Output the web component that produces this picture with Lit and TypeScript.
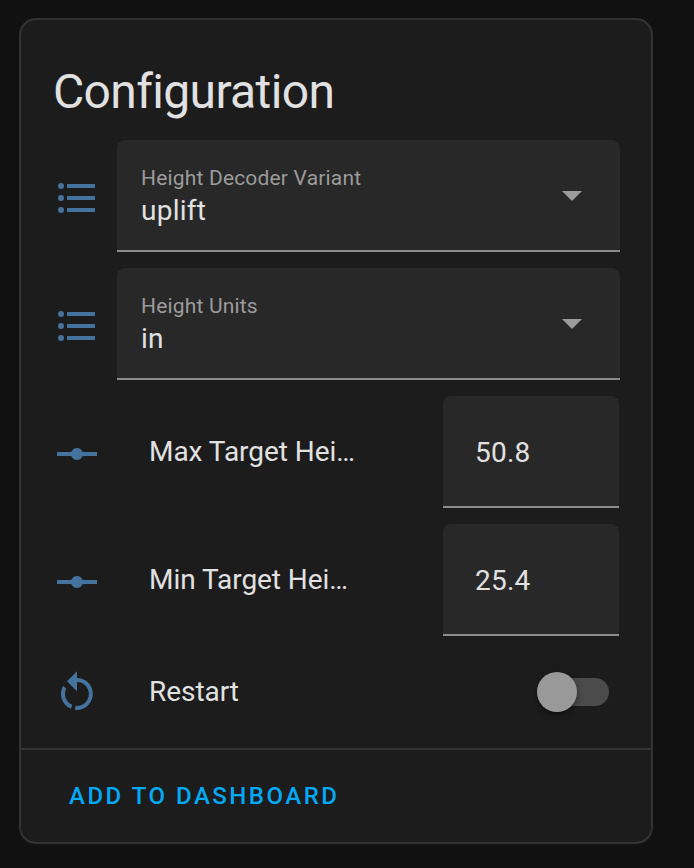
import { LitElement, html, css, svg } from "lit";
import { customElement, property } from "lit/decorators.js";

const ICONS: Record<string, string> = {
  list: "M7,5H21V7H7V5M7,13V11H21V13H7M4,4.5A1.5,1.5 0 0,1 5.5,6A1.5,1.5 0 0,1 4,7.5A1.5,1.5 0 0,1 2.5,6A1.5,1.5 0 0,1 4,4.5M4,10.5A1.5,1.5 0 0,1 5.5,12A1.5,1.5 0 0,1 4,13.5A1.5,1.5 0 0,1 2.5,12A1.5,1.5 0 0,1 4,10.5M7,19V17H21V19H7M4,16.5A1.5,1.5 0 0,1 5.5,18A1.5,1.5 0 0,1 4,19.5A1.5,1.5 0 0,1 2.5,18A1.5,1.5 0 0,1 4,16.5Z",
  vertex: "M2,11H9.17C9.58,9.83 10.69,9 12,9C13.31,9 14.42,9.83 14.83,11H22V13H14.83C14.42,14.17 13.31,15 12,15C10.69,15 9.58,14.17 9.17,13H2V11Z",
  restart: "M12,4C14.1,4 16.1,4.8 17.6,6.3C20.7,9.4 20.7,14.5 17.6,17.6C15.8,19.5 13.3,20.2 10.9,19.9L11.4,17.9C13.1,18.1 14.9,17.5 16.2,16.2C18.5,13.9 18.5,10.1 16.2,7.7C15.1,6.6 13.5,6 12,6V10.6L7,5.6L12,0.6V4M6.3,17.6C3.7,15 3.3,11 5.1,7.9L6.6,9.4C5.5,11.6 5.9,14.4 7.8,16.2C8.3,16.7 8.9,17.1 9.6,17.4L9,19.4C8,19 7.1,18.4 6.3,17.6Z",
  caret: "M7,10L12,15L17,10H7Z",
};

@customElement("ui-icon")
class UiIcon extends LitElement {
  @property() name = "list";
  static styles = css`
    :host { display: block; flex: none; width: 48px; height: 48px; }
    svg { display: block; width: 100%; height: 100%; fill: currentColor; }
  `;
  render() {
    return html`<svg viewBox="0 0 24 24">${svg`<path d=${ICONS[this.name]}></path>`}</svg>`;
  }
}

@customElement("select-row")
class SelectRow extends LitElement {
  @property() label = "";
  @property() value = "";
  static styles = css`
    :host { display: flex; height: 112px; align-items: center; }
    .lead { color: #44739e; margin: 4px 16px 0 0; }
    .field {
      flex: 1; height: 112px; box-sizing: border-box; display: flex; align-items: center;
      background: #282828; border-bottom: 2px solid #8b8b8b; border-radius: 8px 8px 0 0;
      padding: 0 24px;
    }
    .texts { flex: 1; display: flex; flex-direction: column; padding-top: 6px; }
    .label { font-size: 21px; line-height: 26px; letter-spacing: 0.18px; color: #9b9b9b; }
    .value { font-size: 28px; line-height: 40px; letter-spacing: 0.25px; color: #e1e1e1; }
    .caret { color: #9b9b9b; }
  `;
  render() {
    return html`
      <ui-icon class="lead" name="list"></ui-icon>
      <div class="field">
        <div class="texts">
          <span class="label">${this.label}</span>
          <span class="value">${this.value}</span>
        </div>
        <ui-icon class="caret" name="caret"></ui-icon>
      </div>
    `;
  }
}

@customElement("number-row")
class NumberRow extends LitElement {
  @property() label = "";
  @property() value = "";
  static styles = css`
    :host { display: flex; height: 112px; align-items: center; padding-right: 1px; }
    .lead { color: #44739e; margin: 4px 48px 0 0; }
    .name {
      width: 210px; font-size: 28px; line-height: 40px; letter-spacing: -0.05px; color: #e1e1e1;
      white-space: nowrap; overflow: hidden; text-overflow: ellipsis;
    }
    .field {
      width: 176px; height: 112px; box-sizing: border-box; margin-left: auto;
      display: flex; align-items: center; padding: 2px 32px 0;
      background: #282828; border-bottom: 2px solid #8b8b8b; border-radius: 8px 8px 0 0;
      font-size: 28px; letter-spacing: 0.25px; color: #e1e1e1;
    }
  `;
  render() {
    return html`
      <ui-icon class="lead" name="vertex"></ui-icon>
      <div class="name">${this.label}</div>
      <div class="field">${this.value}</div>
    `;
  }
}

@customElement("toggle-row")
class ToggleRow extends LitElement {
  @property() label = "";
  static styles = css`
    :host { display: flex; height: 80px; align-items: center; padding-right: 11px; }
    .lead { color: #44739e; margin: 4px 48px 0 0; }
    .name { flex: 1; font-size: 28px; line-height: 40px; letter-spacing: -0.05px; color: #e1e1e1; }
    .switch { display: flex; align-items: center; width: 72px; height: 40px; }
    .track { flex: 1; height: 28px; border-radius: 14px; background: #4b4b4b; }
    .thumb {
      width: 40px; height: 40px; border-radius: 50%; background: #999; margin-right: -40px; z-index: 1;
      box-shadow: 0 3px 4px rgba(0, 0, 0, 0.25), 0 2px 8px rgba(0, 0, 0, 0.2);
    }
  `;
  render() {
    return html`
      <ui-icon class="lead" name="restart"></ui-icon>
      <div class="name">${this.label}</div>
      <div class="switch"><div class="thumb"></div><div class="track"></div></div>
    `;
  }
}

@customElement("app-root")
class AppRoot extends LitElement {
  static styles = css`
    :host {
      display: block; box-sizing: border-box; width: 100%; height: 868px;
      padding: 18px 41px 24px 19px; background: #111;
      font-family: Roboto, "Noto Sans", sans-serif;
    }
    .card {
      box-sizing: border-box; height: 826px; display: flex; flex-direction: column;
      background: #1c1c1c; border: 2px solid #333; border-radius: 17px;
    }
    .title {
      margin: 0; padding: 24px 32px 0; height: 96px; line-height: 96px;
      font-size: 48px; font-weight: 400; letter-spacing: -0.64px; color: #e1e1e1;
    }
    .rows { flex: 1; display: flex; flex-direction: column; gap: 16px; padding: 0 31px 0 32px; }
    .actions {
      box-sizing: border-box; height: 94px; border-top: 2px solid #333;
      display: flex; align-items: center; padding: 0 48px;
    }
    .button { font-size: 24px; font-weight: 500; letter-spacing: 2.5px; color: #03a9f4; }
  `;
  render() {
    return html`
      <div class="card">
        <h1 class="title">Configuration</h1>
        <div class="rows">
          <select-row label="Height Decoder Variant" value="uplift"></select-row>
          <select-row label="Height Units" value="in"></select-row>
          <number-row label="Max Target Height" value="50.8"></number-row>
          <number-row label="Min Target Height" value="25.4"></number-row>
          <toggle-row label="Restart"></toggle-row>
        </div>
        <div class="actions"><span class="button">ADD TO DASHBOARD</span></div>
      </div>
    `;
  }
}
